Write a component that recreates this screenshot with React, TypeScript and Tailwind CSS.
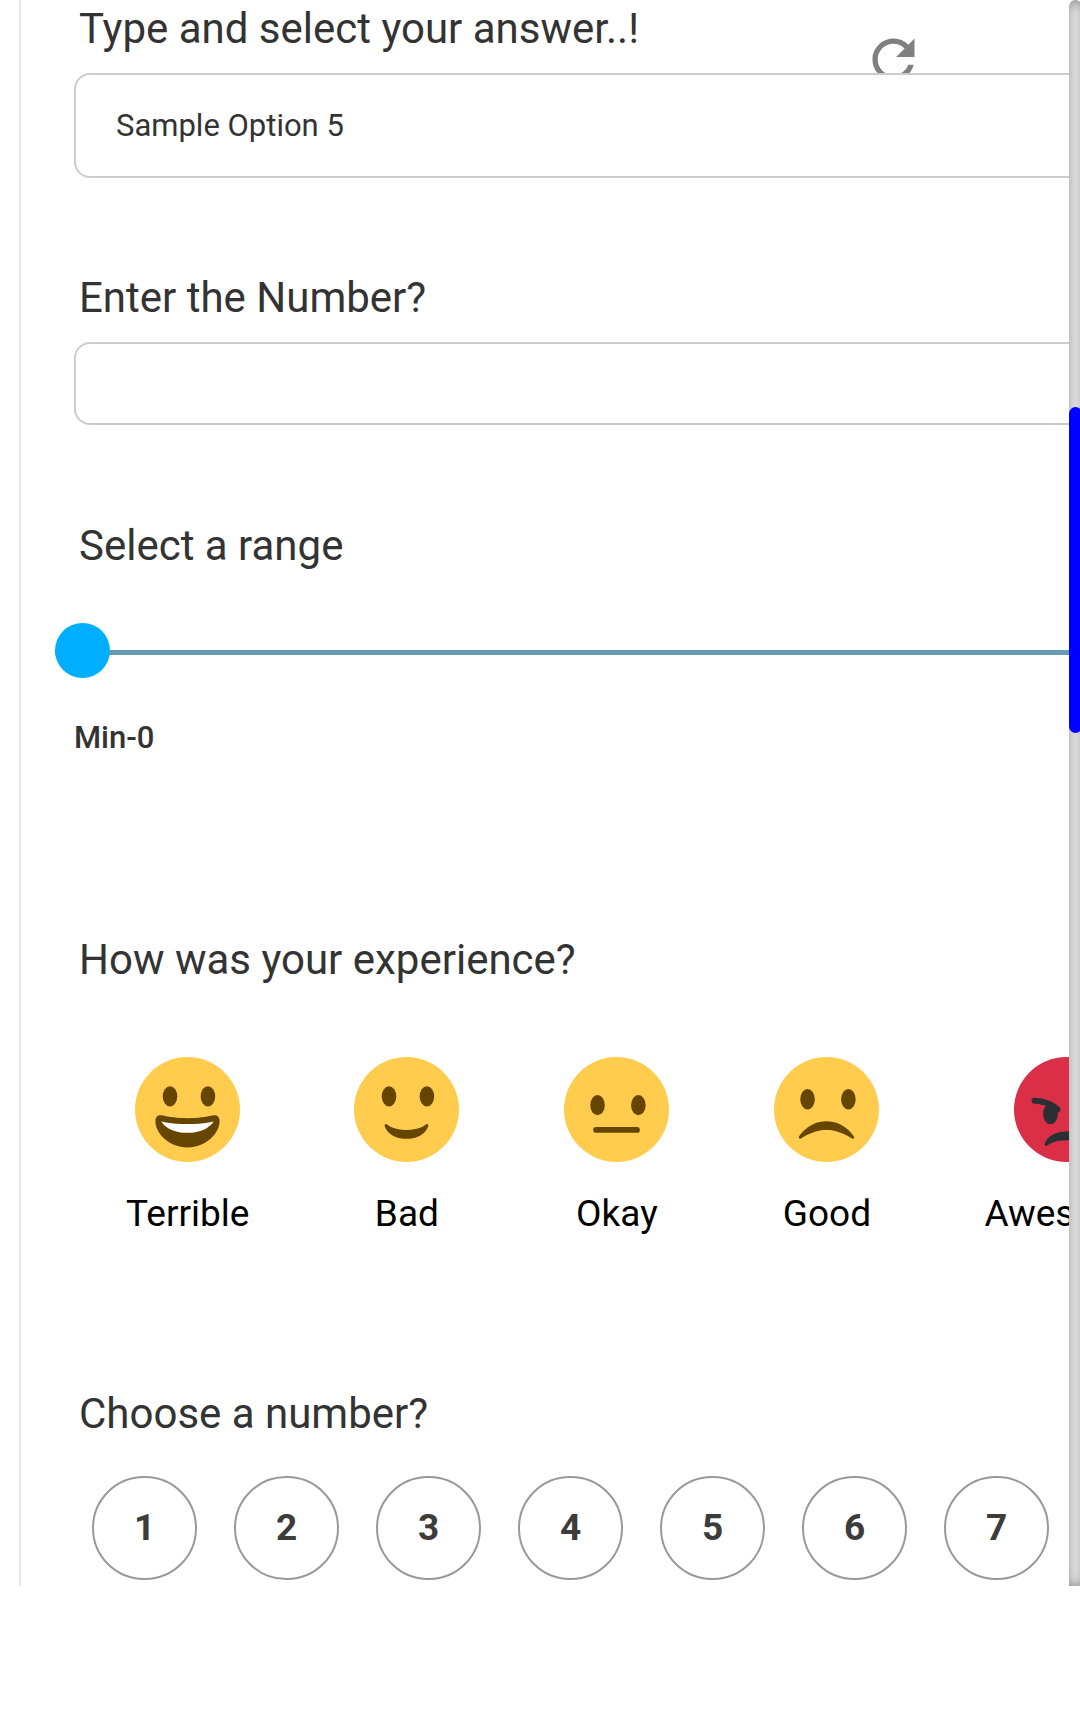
import { useState } from "react";
import type { ReactNode } from "react";
import { MdRefresh } from "react-icons/md";

function Face({ fill = "#FFCC4D", children }: { fill?: string; children: ReactNode }) {
  return (
    <svg viewBox="0 0 36 36" className="size-[105px]" aria-hidden="true">
      <circle cx="18" cy="18" r="18" fill={fill} />
      {children}
    </svg>
  );
}

function Eyes({ left, right, y }: { left: number; right: number; y: number }) {
  return (
    <g fill="#664500">
      <ellipse cx={left} cy={y} rx="2.5" ry="3.5" />
      <ellipse cx={right} cy={y} rx="2.5" ry="3.5" />
    </g>
  );
}

const ratings: { label: string; face: ReactNode }[] = [
  {
    label: "Terrible",
    face: (
      <Face>
        <Eyes left={12} right={25} y={13.5} />
        <path
          fill="#664500"
          d="M18 21c-3.623 0-6.027-.422-9-1-.679-.131-2 0-2 2 0 4 4.595 9 11 9 6.404 0 11-5 11-9 0-2-1.321-2.132-2-2-2.973.578-5.377 1-9 1z"
        />
        <path fill="#fff" d="M9 22s3 1 9 1 9-1 9-1-2 4-9 4-9-4-9-4z" />
      </Face>
    ),
  },
  {
    label: "Bad",
    face: (
      <Face>
        <Eyes left={12} right={25} y={13.5} />
        <path
          fill="#664500"
          d="M10.515 23.621C10.56 23.8 11.683 28 18 28c6.318 0 7.44-4.2 7.485-4.379.055-.217-.043-.442-.237-.554-.195-.111-.439-.078-.6.077C24.629 23.163 22.694 25 18 25s-6.63-1.837-6.648-1.855C11.256 23.05 11.128 23 11 23c-.084 0-.169.021-.246.064-.196.112-.294.339-.239.557z"
        />
      </Face>
    ),
  },
  {
    label: "Okay",
    face: (
      <Face>
        <Eyes left={11.5} right={25.5} y={16.5} />
        <rect x="10" y="24" width="16" height="2" rx="1" fill="#664500" />
      </Face>
    ),
  },
  {
    label: "Good",
    face: (
      <Face>
        <Eyes left={11.5} right={25.5} y={14.5} />
        <path
          fill="#664500"
          d="M8.665 27.871c.178.161.444.171.635.029.039-.029 3.922-2.9 8.7-2.9 4.766 0 8.662 2.871 8.7 2.9.191.142.457.13.635-.029.177-.16.217-.424.094-.628C27.3 27.029 24.212 22 18 22s-9.301 5.028-9.429 5.243c-.123.205-.084.468.094.628z"
        />
      </Face>
    ),
  },
  {
    label: "Awesome",
    face: (
      <Face fill="#DA2F47">
        <path
          fill="#292F33"
          d="M25.485 29.879C25.44 29.7 24.317 25.5 18 25.5c-6.318 0-7.44 4.2-7.485 4.379-.055.217.043.442.237.554.195.109.439.079.6-.077.019-.019 1.954-1.856 6.648-1.856s6.63 1.837 6.648 1.855c.096.095.224.145.352.145.084 0 .169-.021.246-.064.196-.112.294-.339.239-.557zM15.707 17.293C12.452 14.038 7.221 14 7 14c-.552 0-.999.447-.999.998-.001.552.446 1 .998 1.002.029 0 1.925.022 3.983.737-.593.64-.982 1.634-.982 2.763 0 1.934 1.119 3.5 2.5 3.5s2.5-1.566 2.5-3.5c0-.174-.019-.34-.037-.507.013 0 .025.007.037.007.256 0 .512-.098.707-.293.391-.391.391-1.023 0-1.414zM29 14c-.221 0-5.451.038-8.707 3.293-.391.391-.391 1.023 0 1.414.195.195.451.293.707.293.013 0 .024-.007.036-.007-.016.167-.036.333-.036.507 0 1.934 1.119 3.5 2.5 3.5s2.5-1.566 2.5-3.5c0-1.129-.389-2.123-.982-2.763 2.058-.715 3.954-.737 3.984-.737.551-.002.998-.45.997-1.002-.001-.551-.447-.998-.999-.998z"
        />
      </Face>
    ),
  },
];

const numbers = [1, 2, 3, 4, 5, 6, 7];

const titleClass = "block pl-[5px] text-[42px] leading-[50px] text-[#333]";
const fieldClass =
  "relative block w-full rounded-[16px] border-2 border-[#ccc] bg-white px-10 text-[31px] text-[#333] outline-none";

export default function App() {
  const [answer, setAnswer] = useState("Sample Option 5");
  const [amount, setAmount] = useState("");
  const [range, setRange] = useState(0);

  return (
    <div className="flex w-full overflow-hidden bg-white pl-[19px] font-[Roboto,sans-serif]">
      <main className="min-w-0 flex-1 overflow-hidden border-l-2 border-[#e8e8e8] pt-1 pb-1.5 pl-[53px]">
        <form className="-mr-10" onSubmit={(e) => e.preventDefault()}>
          <section className="relative">
            <label htmlFor="answer" className={titleClass}>
              Type and select your answer..!
            </label>
            <button
              type="button"
              aria-label="Reset answer"
              onClick={() => setAnswer("")}
              className="absolute top-6 right-[184px] text-[#808080]"
            >
              <MdRefresh className="size-[63px]" />
            </button>
            <input
              id="answer"
              value={answer}
              onChange={(e) => setAnswer(e.target.value)}
              className={`${fieldClass} mt-[19px] h-[105px]`}
            />
          </section>

          <section className="mt-[95px]">
            <label htmlFor="amount" className={titleClass}>
              Enter the Number?
            </label>
            <input
              id="amount"
              inputMode="numeric"
              value={amount}
              onChange={(e) => setAmount(e.target.value)}
              className={`${fieldClass} mt-[19px] h-[83px]`}
            />
          </section>

          <section className="mt-24">
            <label htmlFor="range" className={titleClass}>
              Select a range
            </label>
            <div className="mt-[54px] -ml-[19px]">
              <input
                id="range"
                type="range"
                min={0}
                max={100}
                value={range}
                onChange={(e) => setRange(Number(e.target.value))}
                className="block h-[55px] w-full appearance-none bg-transparent outline-none [&::-webkit-slider-runnable-track]:h-[5px] [&::-webkit-slider-runnable-track]:bg-[#669aae] [&::-webkit-slider-thumb]:-mt-[27px] [&::-webkit-slider-thumb]:size-[55px] [&::-webkit-slider-thumb]:appearance-none [&::-webkit-slider-thumb]:rounded-full [&::-webkit-slider-thumb]:bg-[#00aeff]"
              />
            </div>
            <p className="mt-10 text-[31px] leading-9 font-medium text-[#333]">Min-0</p>
          </section>

          <section className="mt-[179px]" aria-labelledby="experience">
            <h2 id="experience" className={titleClass}>
              How was your experience?
            </h2>
            <div className="mt-[72px] flex gap-[105px] pl-[52px]">
              {ratings.map(({ label, face }) => (
                <button key={label} type="button" className="flex shrink-0 flex-col items-center gap-[31px]">
                  {face}
                  <span className="text-[37px] leading-[42px] text-black">{label}</span>
                </button>
              ))}
            </div>
          </section>

          <section className="mt-[154px]" aria-labelledby="choose">
            <h2 id="choose" className={titleClass}>
              Choose a number?
            </h2>
            <div className="mt-[37px] flex gap-[37px] pl-[18px]">
              {numbers.map((n) => (
                <button
                  key={n}
                  type="button"
                  className="h-[104px] w-[105px] shrink-0 rounded-full border-2 border-[#999] text-[37px] leading-[42px] font-bold text-[#3c3c3c]"
                >
                  {n}
                </button>
              ))}
            </div>
          </section>
        </form>
      </main>

      <div className="-mr-0.5 flex w-[13px] shrink-0 flex-col rounded-t-full bg-white pt-[407px] shadow-[inset_0_0_13px_grey]">
        <div className="h-[326px] rounded-full bg-[#00f]" />
      </div>
    </div>
  );
}
